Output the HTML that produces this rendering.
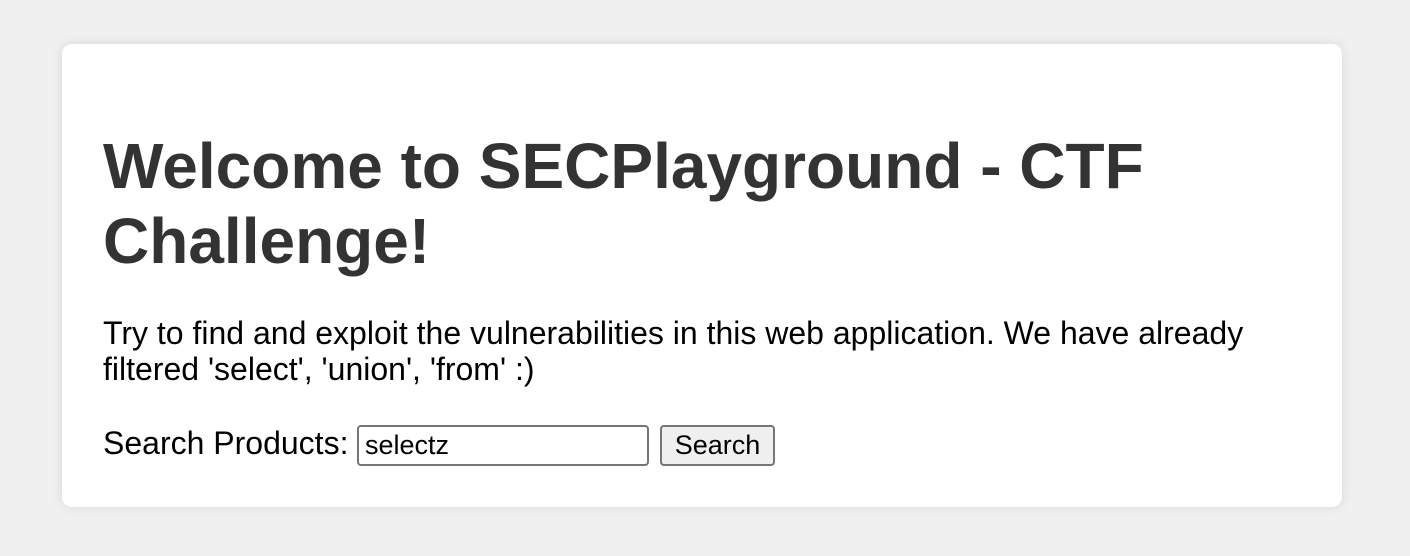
<!DOCTYPE html>
<html><head><style>
html,body{margin:0;padding:0;background:#f0f0f0;width:1410px;height:556px;overflow:hidden;font-family:"Liberation Sans",Arial,sans-serif;}
.card{position:absolute;left:62px;top:44px;width:1280px;height:463px;background:#fff;border-radius:10px;box-shadow:0 0 12px rgba(0,0,0,0.1);}
h1{position:absolute;left:41px;top:85px;margin:0;font-size:64px;line-height:75px;color:#333;font-weight:bold;width:1198px;}
p{position:absolute;left:41px;top:271px;margin:0;font-size:32px;line-height:36px;color:#000;width:1198px;}
.lbl{position:absolute;left:41px;top:381px;font-size:32px;line-height:36px;}
.inp{position:absolute;left:295px;top:381px;height:37px;border:2px solid #767676;border-radius:4px;font-size:27px;line-height:37px;padding-left:6px;box-sizing:content-box;width:282px;}
.btn{position:absolute;left:598px;top:381px;width:111px;height:37px;border:2px solid #767676;border-radius:4px;background:#efefef;font-size:27px;line-height:37px;text-align:center;}
</style></head><body>
<div class="card">
<h1>Welcome to SECPlayground - CTF Challenge!</h1>
<p>Try to find and exploit the vulnerabilities in this web application. We have already filtered 'select', 'union', 'from' :)</p>
<div class="lbl">Search Products:</div>
<div class="inp">selectz</div>
<div class="btn">Search</div>
</div>
</body></html>
